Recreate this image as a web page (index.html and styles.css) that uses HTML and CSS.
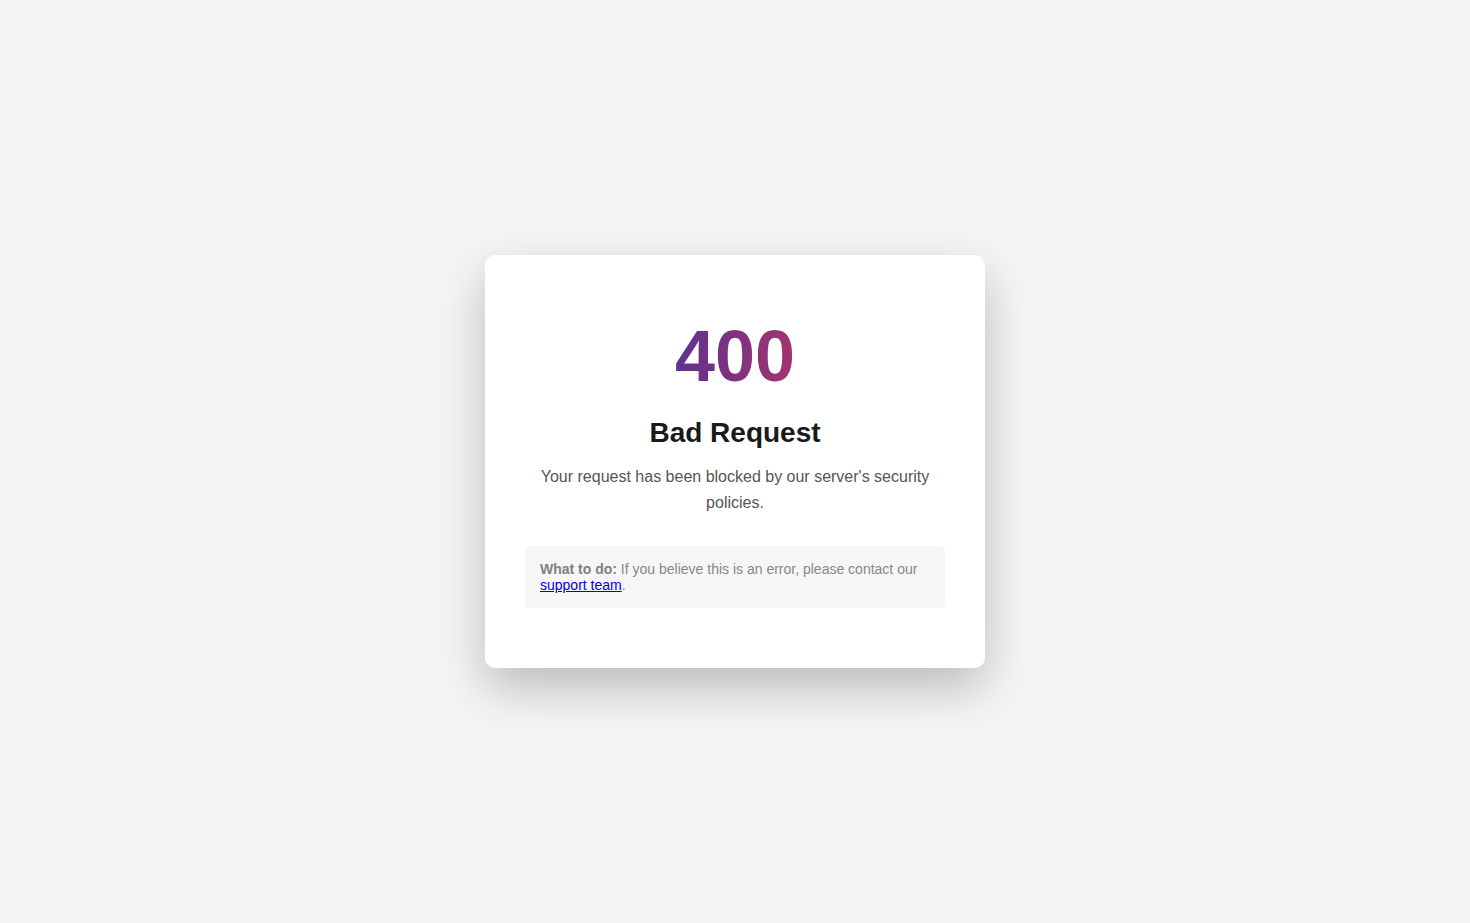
FILE: index.html
```html
<!DOCTYPE html>
<html lang="en">
<head>
<meta charset="utf-8">
<title>400 Bad Request</title>
<link rel="stylesheet" href="styles.css">
</head>
<body>
<main class="card">
  <div class="code">400</div>
  <h1 class="title">Bad Request</h1>
  <p class="message">Your request has been blocked by our server's security policies.</p>
  <div class="hint"><strong>What to do:</strong> If you believe this is an error, please contact our <a href="#">support team</a>.</div>
</main>
</body>
</html>
```

FILE: styles.css
```css
html, body {
  margin: 0;
  padding: 0;
}
body {
  background: #f5f5f5;
  font-family: "Liberation Sans", Arial, sans-serif;
  min-height: 100vh;
  display: flex;
  align-items: center;
  justify-content: center;
}
.card {
  box-sizing: border-box;
  width: 500px;
  background: #fff;
  border-radius: 10px;
  padding: 60px 40px;
  text-align: center;
  box-shadow: 0 20px 50px rgba(0, 0, 0, 0.24);
}
.code {
  font-size: 72px;
  font-weight: bold;
  margin: 0 0 20px;
  background: linear-gradient(90deg, #5e3190, #a3336f);
  -webkit-background-clip: text;
  background-clip: text;
  color: transparent;
  display: inline-block;
}
.title {
  font-size: 28px;
  font-weight: bold;
  color: #1a1a1a;
  margin: 0 0 15px;
}
.message {
  font-size: 16px;
  line-height: 1.6;
  color: #555;
  margin: 0 0 30px;
}
.hint {
  background: #f6f6f6;
  border-radius: 5px;
  padding: 15px;
  text-align: left;
  font-size: 14px;
  color: #888;
}
.hint strong {
  color: #808080;
}
.hint a {
  color: #0000ee;
}
```
